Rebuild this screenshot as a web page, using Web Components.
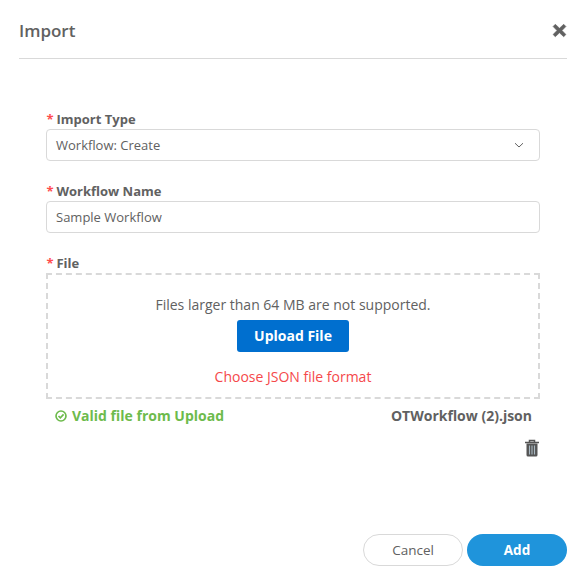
<!DOCTYPE html>
<html lang="en">
<head>
<meta charset="utf-8">
<title>Import</title>
<style>
html,body{margin:0;padding:0;background:#fff;}
body{font-family:"Open Sans",sans-serif;font-size:13px;color:#616161;}
</style>
</head>
<body>
<import-dialog>
  <form-field label="Import Type"><text-box value="Workflow: Create" chevron></text-box></form-field>
  <form-field label="Workflow Name"><text-box value="Sample Workflow"></text-box></form-field>
  <form-field label="File" last><file-drop></file-drop></form-field>
  <file-status></file-status>
</import-dialog>
<script>
function def(name, css, html){
  customElements.define(name, class extends HTMLElement{
    constructor(){
      super();
      const r=this.attachShadow({mode:'open'});
      const label=this.getAttribute('label')||'', value=this.getAttribute('value')||'';
      r.innerHTML='<style>'+css+'</style>'+html.replace('{label}',label).replace('{value}',value);
      if(name==='text-box'&&!this.hasAttribute('chevron')) r.querySelector('svg').remove();
    }
  });
}
def('import-dialog',`
  :host{display:flex;flex-direction:column;width:583px;height:585px;box-sizing:border-box;padding:0 16px 19px 19px;}
  header{display:flex;justify-content:space-between;align-items:center;height:58px;border-bottom:1px solid #d9d9d9;flex:none;}
  h1{margin:0;font:600 17px/22px "Open Sans",sans-serif;color:#616161;padding-top:3px;}
  svg{display:block;margin-top:2px;}
  main{flex:1;padding:50px 27px 0;display:flex;flex-direction:column;}
  footer{display:flex;justify-content:flex-end;gap:4px;flex:none;}
  button{height:32px;width:100px;border-radius:16px;font:13.5px/1 "Open Sans",sans-serif;padding:2px 0 0;box-sizing:border-box;}
  .c{background:#fff;border:1px solid #d9d9d9;color:#616161;}
  .a{background:#1f94db;border:0;color:#fff;font-weight:700;}
`,`<header><h1>Import</h1>
  <svg width="15" height="15" viewBox="0 0 15 15"><path d="M3.3 1.3 7.5 5.2 11.7 1.3 13.9 3.5 10 7.5 13.9 11.5 11.7 13.7 7.5 9.8 3.3 13.7 1.1 11.5 5 7.5 1.1 3.5Z" fill="#616161" stroke="#616161" stroke-width=".6" stroke-linejoin="round"/></svg>
  </header><main><slot></slot></main>
  <footer><button class="c">Cancel</button><button class="a">Add</button></footer>`);
def('form-field',`
  :host{display:block;margin-bottom:20px;}
  :host([last]){margin-bottom:0;}
  .l{font:700 13px/20px "Open Sans",sans-serif;color:#616161;height:20px;display:block;}
  i{font:700 13px/20px "Open Sans",sans-serif;font-style:normal;color:#ff4d4f;margin:0 -.5px 0 .5px;}
`,`<span class="l"><i>*</i> {label}</span><slot></slot>`);
def('text-box',`
  :host{display:flex;align-items:center;justify-content:space-between;height:32px;box-sizing:border-box;border:1px solid #d9d9d9;border-radius:4px;padding:0 15px 0 9px;font:13px/20px "Open Sans",sans-serif;color:#616161;background:#fff;}
  svg{display:block;}
`,`<span>{value}</span><svg width="10" height="10" viewBox="0 0 10 10"><path d="M1 3.2 5 7 9 3.2" fill="none" stroke="#616161" stroke-width="1"/></svg>`);
def('file-drop',`
  :host{display:flex;flex-direction:column;align-items:center;height:126px;box-sizing:border-box;border:2px dashed #d9d9d9;padding-top:20px;font:14px/20px "Open Sans",sans-serif;color:#616161;}
  span{display:block;height:20px;}
  button{margin-top:5px;width:112px;height:32px;background:#006fcf;color:#fff;border:0;border-radius:3px;font:700 14px/1 "Open Sans",sans-serif;padding:0;}
  .e{color:#f5484a;margin-top:15px;font-size:14px;}
`,`<span>Files larger than 64 MB are not supported.</span><button>Upload File</button><span class="e">Choose JSON file format</span>`);
def('file-status',`
  :host{display:flex;flex-direction:column;padding-top:7px;font:700 14px/20px "Open Sans",sans-serif;color:#616161;}
  .r{display:flex;justify-content:space-between;align-items:center;height:20px;padding:0 8px 0 9px;}
  .v{display:flex;align-items:center;gap:5px;color:#6dbb4c;}
  svg{display:block;}
  .t{align-self:flex-end;margin-top:13px;}
`,`<div class="r"><span class="v"><svg width="12" height="12" viewBox="0 0 13 13"><circle cx="6.5" cy="6.5" r="5.4" fill="none" stroke="#6dbb4c" stroke-width="1.8"/><path d="M3.8 6.5 5.8 8.5 9.3 4.8" fill="none" stroke="#6dbb4c" stroke-width="1.8"/></svg>Valid file from Upload</span><span>OTWorkflow (2).json</span></div>
<svg class="t" width="16" height="18" viewBox="0 0 16 18"><path d="M1 3.5H15M5.5 3.2V1.6H10.5V3.2" fill="none" stroke="#555" stroke-width="1.5"/><path d="M2.5 4.5H13.5V16A1.5 1.5 0 0 1 12 17.5H4A1.5 1.5 0 0 1 2.5 16Z" fill="#555"/><path d="M5.5 6.5V15.5M8 6.5V15.5M10.5 6.5V15.5" stroke="#a9b8c2" stroke-width="1.1"/></svg>`);
</script>
</body>
</html>
